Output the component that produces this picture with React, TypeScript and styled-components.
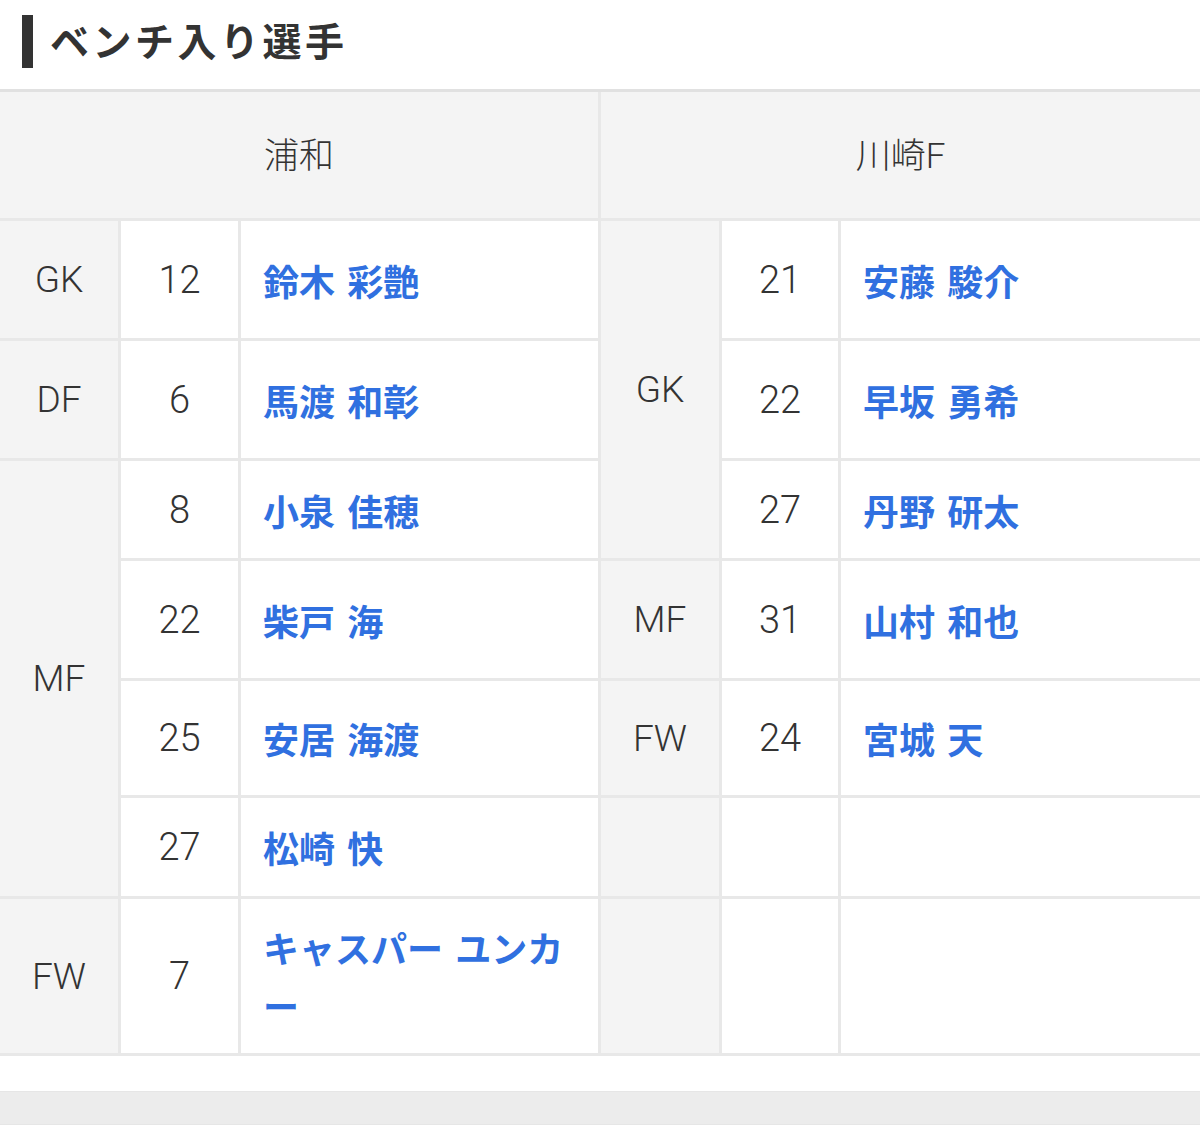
import React from "react";
import styled, { createGlobalStyle } from "styled-components";

const Global = createGlobalStyle`
  html, body { margin: 0; padding: 0; background: #ffffff; }
  body { font-family: Roboto, "Noto Sans CJK JP", sans-serif; color: #333333; }
`;

const Page = styled.div`
  width: 1200px;
  display: flex;
  flex-direction: column;
`;

const TitleBar = styled.div`
  height: 89px;
  display: flex;
  align-items: center;
  gap: 17px;
  padding-left: 22px;
  box-sizing: border-box;
`;

const TitleMark = styled.span`
  display: block;
  width: 11px;
  height: 53px;
  background: #333333;
  margin-top: -7px;
`;

const TitleText = styled.h2`
  margin: 0;
  margin-top: -10px;
  font-family: "Noto Sans CJK JP", sans-serif;
  font-weight: 700;
  font-size: 39px;
  letter-spacing: 3.5px;
  color: #333333;
  line-height: 1;
`;

const Grid = styled.div`
  display: grid;
  grid-template-columns: 118px 117px 357px 118px 116px 1fr;
  grid-template-rows: 126px 117px 117px 97px 117px 114px 98px 154px;
  gap: 3px;
  background: #e8e8e8;
  border-top: 3px solid #e1e1e1;
  border-bottom: 3px solid #e8e8e8;
`;

type Kind = "head" | "pos" | "num" | "name";

const Cell = styled.div<{ $kind: Kind; $span?: number }>`
  display: flex;
  align-items: center;
  justify-content: ${(p) => (p.$kind === "name" ? "flex-start" : "center")};
  padding: ${(p) =>
    p.$kind === "name" ? "0 24px 0 22px" : p.$kind === "head" ? "0 0 6px" : "0"};
  box-sizing: border-box;
  background: ${(p) => (p.$kind === "head" || p.$kind === "pos" ? "#f4f4f4" : "#ffffff")};
  grid-column: ${(p) => (p.$kind === "head" ? "span 3" : "auto")};
  grid-row: ${(p) => (p.$span ? `span ${p.$span}` : "auto")};
  font-family: Roboto, "Noto Sans CJK JP", sans-serif;
  font-weight: 300;
  font-size: ${(p) => (p.$kind === "head" ? "35px" : p.$kind === "num" ? "38px" : "37px")};
  color: #333333;
`;

const NameLink = styled.a`
  font-family: "Noto Sans CJK JP", sans-serif;
  font-weight: 700;
  font-size: 36px;
  line-height: 58px;
  word-spacing: 4px;
  color: #3070e0;
  text-decoration: none;
`;

const Spacer = styled.div`
  height: 35px;
  background: #ffffff;
`;

const Band = styled.div`
  height: 32px;
  background: #ececec;
  border-top: 1px solid #e6e6e6;
  border-bottom: 1px solid #e6e6e6;
`;

type Row = { pos?: string; span?: number; emptyPos?: boolean; num: string; name: string };

const cells: React.ReactNode[] = [];

const add = (key: string, node: React.ReactNode) => cells.push(<React.Fragment key={key}>{node}</React.Fragment>);

const rows: Array<[Row, Row]> = [
  [
    { pos: "GK", num: "12", name: "鈴木 彩艶" },
    { pos: "GK", span: 3, num: "21", name: "安藤 駿介" },
  ],
  [
    { pos: "DF", num: "6", name: "馬渡 和彰" },
    { num: "22", name: "早坂 勇希" },
  ],
  [
    { pos: "MF", span: 4, num: "8", name: "小泉 佳穂" },
    { num: "27", name: "丹野 研太" },
  ],
  [
    { num: "22", name: "柴戸 海" },
    { pos: "MF", num: "31", name: "山村 和也" },
  ],
  [
    { num: "25", name: "安居 海渡" },
    { pos: "FW", num: "24", name: "宮城 天" },
  ],
  [
    { num: "27", name: "松崎 快" },
    { emptyPos: true, num: "", name: "" },
  ],
  [
    { pos: "FW", num: "7", name: "キャスパー ユンカー" },
    { emptyPos: true, num: "", name: "" },
  ],
];

rows.forEach(([l, r], i) => {
  [l, r].forEach((s, j) => {
    const k = `${i}-${j}`;
    if (s.pos || s.emptyPos) {
      add(k + "p", <Cell $kind="pos" $span={s.span}>{s.pos}</Cell>);
    }
    add(k + "n", <Cell $kind="num">{s.num}</Cell>);
    add(
      k + "m",
      <Cell $kind="name">{s.name ? <NameLink href="#">{s.name}</NameLink> : null}</Cell>
    );
  });
});

export default function App() {
  return (
    <Page>
      <Global />
      <TitleBar>
        <TitleMark />
        <TitleText>ベンチ入り選手</TitleText>
      </TitleBar>
      <Grid>
        <Cell $kind="head">浦和</Cell>
        <Cell $kind="head">川崎F</Cell>
        {cells}
      </Grid>
      <Spacer />
      <Band />
    </Page>
  );
}
